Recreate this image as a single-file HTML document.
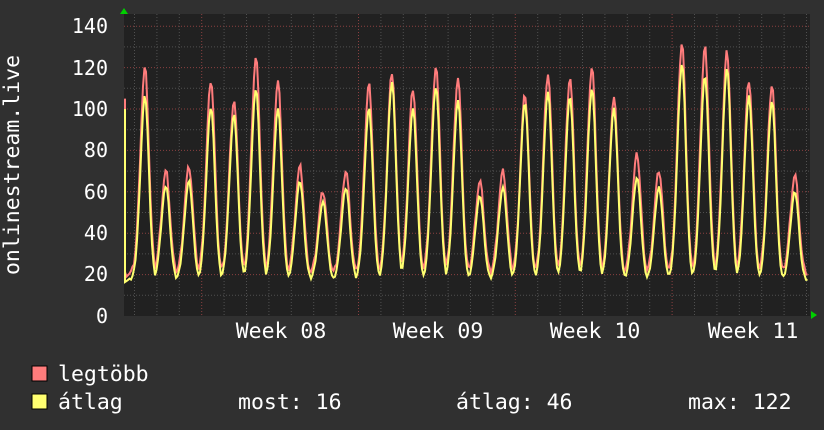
<!DOCTYPE html>
<html><head><meta charset="utf-8"><style>
html,body{margin:0;padding:0;background:#303030;width:824px;height:430px;overflow:hidden}
svg{display:block}
text{font-family:"DejaVu Sans Mono","Liberation Mono",monospace;fill:#fff}
</style></head><body>
<svg id="g" width="824" height="430" xmlns="http://www.w3.org/2000/svg">
<rect x="0" y="0" width="824" height="430" fill="#303030"/>
<rect x="124" y="14" width="686" height="302" fill="#212121"/>
<g id="grid"></g>
<polyline id="mx" fill="none" stroke="#ff7c7c" stroke-width="2"/>
<polyline id="av" fill="none" stroke="#ffff70" stroke-width="2"/>
<polygon points="120,14 124,8 128,14" fill="#00d000"/>
<polygon points="811,311 817,315 811,319" fill="#00d000"/>
<g font-size="20" text-anchor="end">
<text x="108" y="33">140</text><text x="108" y="75">120</text><text x="108" y="116">100</text>
<text x="108" y="157">80</text><text x="108" y="199">60</text><text x="108" y="240">40</text>
<text x="108" y="281">20</text><text x="108" y="323">0</text>
</g>
<g font-size="21.5" text-anchor="middle">
<text x="281" y="338">Week 08</text><text x="438" y="338">Week 09</text>
<text x="595" y="338">Week 10</text><text x="753" y="338">Week 11</text>
</g>
<text font-size="21.5" transform="translate(19,165) rotate(-90)" text-anchor="middle">onlinestream.live</text>
<rect x="32" y="366" width="15" height="15" fill="#ff7c7c" stroke="#000"/>
<rect x="32" y="394" width="15" height="15" fill="#ffff70" stroke="#000"/>
<g font-size="21.5">
<text x="58" y="381">legtöbb</text>
<text x="58" y="409">átlag</text>
<text x="238" y="409">most: 16</text>
<text x="456" y="409">átlag: 46</text>
<text x="688" y="409">max: 122</text>
</g>
</svg>
<script>
var ns="http://www.w3.org/2000/svg",g=document.getElementById("grid");
function Y(v){return 316-v*2.07;}
function line(x1,y1,x2,y2,c){var l=document.createElementNS(ns,"line");l.setAttribute("x1",x1);l.setAttribute("y1",y1);l.setAttribute("x2",x2);l.setAttribute("y2",y2);l.setAttribute("stroke",c);l.setAttribute("stroke-dasharray","1,2");g.appendChild(l);}
for(var v=10;v<=140;v+=10){line(124,Y(v),810,Y(v),v%20==0?"#8a4040":"#505050");}
for(var x=134.5;x<810;x+=22.4){var k=Math.round((x-134.5)/22.4);line(x,14,x,316,(k%7==3)?"#8a4040":"#505050");}
var pk=[[145,120,106],[166,70,63],[189,72,65],[211,114,101],[234,104,97],[256,125,110],[278,113,100],[300,72,65],[323,60,55],[346,70,62],[369,112,100],[392,118,113],[413,110,100],[436,121,111],[458,115,104],[480,65,58],[503,70,62],[525,107,103],[548,117,108],[570,115,106],[592,120,110],[614,105,100],[637,78,67],[659,70,62],[682,132,122],[705,130,116],[727,128,120],[749,114,106],[772,112,104],[795,68,60]];
function val(x,i){var s=0,b=i==1?20:17;for(var j=0;j<pk.length;j++){var d=x-pk[j][0];var h=pk[j][i]-b;var w=d<0?6.5:5.5;s=Math.max(s,h*Math.exp(-d*d/(w*w)));}return b+s+(i==1?(x%7-3)*0.4:(x%5-2)*0.3);}
var a="",b="";
for(var x=125;x<=808;x+=1.5){a+=x+","+Y(Math.max(val(x,1),val(x,2)))+" ";b+=x+","+Y(val(x,2))+" ";}
a="125,"+Y(105)+" "+a;b="125,"+Y(100)+" "+b;
document.getElementById("mx").setAttribute("points",a);
document.getElementById("av").setAttribute("points",b);
</script>
</body></html>
